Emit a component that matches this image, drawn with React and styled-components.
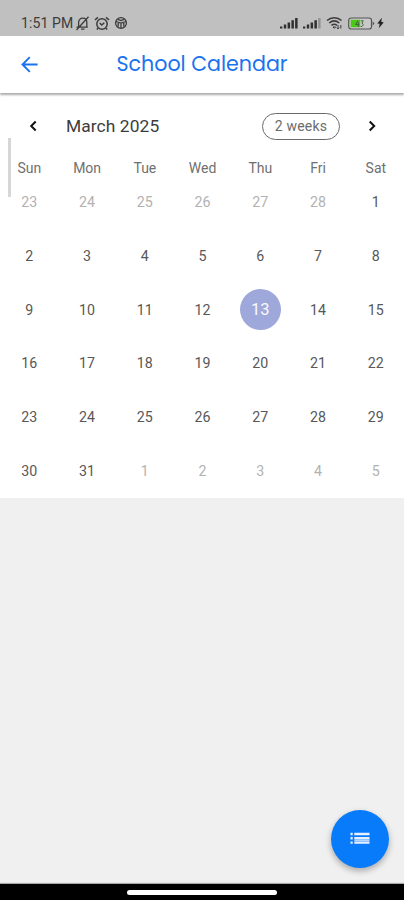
import React, {useState} from "react";
import styled, {createGlobalStyle} from 'styled-components';

const GlobalStyle = createGlobalStyle`
  * {
    box-sizing: border-box;
  }
  body {
    margin: 0;
    font-family: Roboto, 'Noto Sans', sans-serif;
  }
  button {
    font-family: inherit;
    padding: 0;
    border: none;
    background: none;
    cursor: pointer;
  }
  svg {
    display: block;
  }
`

const Screen = styled.div`
  position: relative;
  display: flex;
  flex-direction: column;
  width: 100%;
  height: 900px;
  overflow: hidden;
  background-color: #f0f0f0;
`

const StatusBar = styled.div`
  display: flex;
  justify-content: space-between;
  align-items: center;
  flex: none;
  height: 36px;
  padding: 10px 20px 0 21px;
  background-color: #c0c0c0;
  color: #3c3c3c;
`

const StatusGroup = styled.div`
  display: flex;
  align-items: center;
  gap: ${(props) => props.$gap}px;
`

const Clock = styled.span`
  width: 54px;
  font-size: 14px;
  line-height: 16px;
  letter-spacing: 0.1px;
  white-space: nowrap;
`

const AppBar = styled.header`
  position: relative;
  z-index: 1;
  display: grid;
  grid-template-columns: 60px 1fr 60px;
  align-items: center;
  flex: none;
  height: 57px;
  background-color: #fff;
  box-shadow: 0 2px 2px rgba(0, 0, 0, 0.33);
`

const BackButton = styled.button`
  display: flex;
  justify-content: center;
`

const Title = styled.h1`
  margin: 0 0 1px;
  color: #1a73ee;
  font-family: Poppins, Lato, sans-serif;
  font-size: 20.6px;
  font-weight: 400;
  line-height: 28px;
  text-align: center;
  white-space: nowrap;
`

const Calendar = styled.main`
  position: relative;
  flex: none;
  height: 405px;
  background-color: #fff;
`

const ScrollThumb = styled.div`
  position: absolute;
  top: 45px;
  left: 8px;
  width: 3px;
  height: 59px;
  background-color: #d6d6d6;
`

const MonthRow = styled.div`
  display: flex;
  align-items: center;
  height: 67px;
  padding: 0 20px 1px 21px;
`

const ArrowButton = styled.button`
  display: flex;
  align-items: center;
  justify-content: center;
  width: 24px;
  height: 24px;
`

const Month = styled.div`
  flex: 1;
  padding-left: 21px;
  color: #3c3c3c;
  font-size: 17.4px;
  line-height: 20px;
  letter-spacing: 0.08px;
`

const FormatButton = styled.button`
  && {
    width: 78px;
    height: 27px;
    margin-right: 20px;
    border: 1px solid #6a6a6a;
    border-radius: 14px;
    color: #6c6c6c;
    font-size: 14px;
    letter-spacing: 0.2px;
  }
`

const Weekdays = styled.div`
  display: grid;
  grid-template-columns: repeat(7, 57.75px);
  height: 16px;
  padding-left: 0.5px;
  color: #707070;
  font-size: 14px;
  line-height: 16px;
  text-align: center;
`

const Days = styled.div`
  display: grid;
  grid-template-columns: repeat(7, 57.75px);
  grid-auto-rows: 53.65px;
  padding-left: 0.5px;
`

const DayCell = styled.div`
  display: flex;
  align-items: center;
  justify-content: center;
`

const Day = styled.button`
  && {
    width: 41px;
    height: 41px;
    margin-bottom: 1px;
    border-radius: 50%;
    background-color: ${(props) => (props.$selected ? '#9fa8da' : 'transparent')};
    color: ${(props) => (props.$selected ? '#fafafa' : props.$outside ? '#b2b2b2' : '#585858')};
    font-size: ${(props) => (props.$selected ? '16.5px' : '14.2px')};
    letter-spacing: 0.2px;
  }
`

const ListButton = styled.button`
  && {
    position: absolute;
    right: 15.5px;
    bottom: 32.5px;
    display: flex;
    align-items: center;
    justify-content: center;
    width: 58px;
    height: 58px;
    border-radius: 50%;
    background-color: #087bfb;
    box-shadow: 0 3px 6px rgba(0, 0, 0, 0.3);
  }
`

const NavBar = styled.footer`
  display: flex;
  justify-content: center;
  flex: none;
  height: 16px;
  margin-top: auto;
  padding-top: 6px;
  background-color: #000;
  box-shadow: 0 -1px 1px #aaa;
`

const HomePill = styled.div`
  width: 150px;
  height: 5px;
  border-radius: 3px;
  background-color: #fff;
`

const BellOffIcon = () => (
  <svg width="15" height="15" viewBox="0 0 15 15" fill="none" stroke="#3c3c3c" strokeWidth="1.3">
    <path d="M1.5 11.2H12.8M3.6 11V6.5C3.6 3.8 5.4 2.2 7.7 2.2S11.8 3.8 11.8 6.5V11M6 13.2H9.5M13.5 0.8L1.5 14" />
  </svg>
)

const AlarmIcon = () => (
  <svg width="16" height="15" viewBox="0 0 16 15" fill="none" stroke="#3c3c3c" strokeWidth="1.5">
    <circle cx="8" cy="8" r="5.2" />
    <path d="M5.7 7L7.8 9L10.3 6.8M1 3.8L4 1.4M15 3.8L12 1.4M4 12.2L2.8 13.6M12 12.2L13.2 13.6" />
  </svg>
)

const BallIcon = () => (
  <svg width="14" height="14" viewBox="0 0 14 14" fill="none" stroke="#3c3c3c" strokeWidth="1.3">
    <circle cx="7" cy="7" r="5.4" />
    <path d="M2 5.5L7 7L12 5.5M7 7V12M4 3.3L7 4.6L10 3.3M4.2 7V10.5M9.8 7V10.5" />
  </svg>
)

const SignalIcon = ({weak}) => (
  <svg width="18" height="12" viewBox="0 0 18 12" fill="#303030">
    <rect x="0" y="9.5" width="2.3" height="2" />
    <rect x="3.8" y="7.5" width="2.4" height="4" />
    <rect x="7.6" y="5.5" width="2.5" height="6" />
    <rect x="11.4" y="3.2" width="2.5" height="8.3" />
    <rect x="15.1" y="1" width="2.5" height="10.5" fill={weak ? '#929292' : '#303030'} />
  </svg>
)

const WifiIcon = () => (
  <svg width="17" height="14" viewBox="0 0 17 14" fill="none" stroke="#3c3c3c" strokeWidth="1.6">
    <path d="M1 4.5C5 .8 11.5 .8 15.5 4.5M3.2 7C6.3 4.3 10.2 4.3 13.3 7M5.5 9.4C7.3 7.9 9.2 7.9 11 9.4" />
    <path d="M7 11H9.6L8.3 12.3ZM12 9V12.8M10.8 11.6L12 12.9L13.2 11.6M14.8 12.5V9" strokeWidth="1" />
  </svg>
)

const BatteryIcon = () => (
  <svg width="27" height="13" viewBox="0 0 27 13">
    <rect x="0.7" y="1" width="22.8" height="11" rx="2.5" fill="#c9c9c9" stroke="#555" strokeWidth="1.2" />
    <rect x="2.7" y="2.8" width="9.5" height="7.4" fill="#49c916" />
    <path d="M24.6 4.2L26.5 6.5L24.6 8.8Z" fill="#555" />
    <path d="M10 3.5L7.5 7.5H11.3M10.3 5V10M12.8 3.8H15.3L14 6L15.3 7.8L14 9.5H12.7" fill="none" stroke="#476540" />
  </svg>
)

const BoltIcon = () => (
  <svg width="7" height="12" viewBox="0 0 7 12" fill="#222">
    <path d="M4.8 0.8L0.3 6.6L2.7 6.8L1.8 11.2L6.8 5.3L4.3 5.1Z" />
  </svg>
)

const BackIcon = () => (
  <svg width="18" height="18" viewBox="0 0 18 18" fill="none" stroke="#1a73ee" strokeWidth="1.9">
    <path d="M16.6 8.5H1.6M8.8 1.2L1.5 8.5L8.8 15.8" />
  </svg>
)

const Chevron = ({d}) => (
  <svg width="12" height="12" viewBox="0 0 12 12" fill="none" stroke="#111" strokeWidth="2">
    <path d={d} />
  </svg>
)

const ListIcon = () => (
  <svg width="20" height="13" viewBox="0 0 20 13" fill="#e6f0ff">
    <path d="M0.5 0.8H2.7V3.2H0.5ZM0.5 5.1H2.7V7.5H0.5ZM0.5 9.4H2.7V11.8H0.5Z" />
    <path d="M4.3 0.8H19.5V3.2H4.3ZM4.3 5.1H19.5V7.5H4.3ZM4.3 9.4H19.5V11.8H4.3Z" />
    <path d="M4.3 7.5H19.5V9.4H4.3Z" fill="#b5d5ff" />
  </svg>
)

const weekdays = ['Sun', 'Mon', 'Tue', 'Wed', 'Thu', 'Fri', 'Sat'];

// six weeks, starting on Sunday Feb 23
const days = [];
for (let i = 0; i < 42; i++) {
  const date = new Date(2025, 1, 23 + i);
  days.push({key: i, number: date.getDate(), outside: date.getMonth() !== 2});
}

const App = () => {
  // index of March 13
  const [selected, setSelected] = useState(18);

  return (
    <Screen>
      <GlobalStyle />
      <StatusBar>
        <StatusGroup $gap={0}>
          <Clock>1:51 PM</Clock>
          <StatusGroup $gap={4}>
            <BellOffIcon />
            <AlarmIcon />
            <BallIcon />
          </StatusGroup>
        </StatusGroup>
        <StatusGroup $gap={5}>
          <SignalIcon />
          <SignalIcon weak />
          <WifiIcon />
          <StatusGroup $gap={2}>
            <BatteryIcon />
            <BoltIcon />
          </StatusGroup>
        </StatusGroup>
      </StatusBar>
      <AppBar>
        <BackButton aria-label="Back">
          <BackIcon />
        </BackButton>
        <Title>School Calendar</Title>
      </AppBar>
      <Calendar>
        <ScrollThumb />
        <MonthRow>
          <ArrowButton aria-label="Previous">
            <Chevron d="M8.7 1.5L4.2 6L8.7 10.5" />
          </ArrowButton>
          <Month>March 2025</Month>
          <FormatButton>2 weeks</FormatButton>
          <ArrowButton aria-label="Next">
            <Chevron d="M3.7 1.5L8.2 6L3.7 10.5" />
          </ArrowButton>
        </MonthRow>
        <Weekdays>
          {weekdays.map((name) => (
            <span key={name}>{name}</span>
          ))}
        </Weekdays>
        <Days>
          {days.map((day) => (
            <DayCell key={day.key}>
              <Day $selected={day.key === selected} $outside={day.outside} onClick={() => setSelected(day.key)}>
                {day.number}
              </Day>
            </DayCell>
          ))}
        </Days>
      </Calendar>
      <ListButton aria-label="Events">
        <ListIcon />
      </ListButton>
      <NavBar>
        <HomePill />
      </NavBar>
    </Screen>
  )
}

export default App;
